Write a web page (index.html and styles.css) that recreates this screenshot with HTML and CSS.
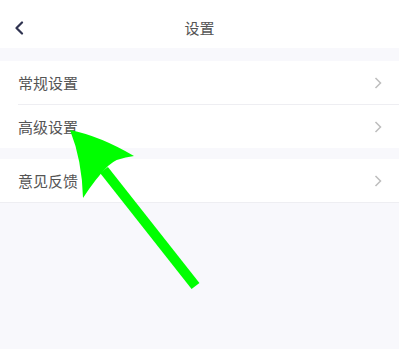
FILE: index.html
```html
<!DOCTYPE html>
<html lang="zh">
<head>
  <meta charset="UTF-8" />
  <title>设置</title>
  <link rel="stylesheet" href="styles.css">
</head>
<body>
  <div class="page">
    <div class="header">
      <svg class="back" width="10" height="14" viewBox="0 0 10 14">
        <path d="M8 1.5 L2.5 7 L8 12.5" fill="none" stroke="#2f3350" stroke-width="2.2" stroke-linecap="round" stroke-linejoin="round"/>
      </svg>
      <span class="title">设置</span>
    </div>

    <div class="group">
      <div class="row">
        <span>常规设置</span>
        <svg class="arrow" width="8" height="12" viewBox="0 0 8 12"><path d="M1.5 1 L6.5 6 L1.5 11" fill="none" stroke="#bdbdbd" stroke-width="1.5"/></svg>
      </div>
      <div class="row">
        <span>高级设置</span>
        <svg class="arrow" width="8" height="12" viewBox="0 0 8 12"><path d="M1.5 1 L6.5 6 L1.5 11" fill="none" stroke="#bdbdbd" stroke-width="1.5"/></svg>
      </div>
    </div>

    <div class="group last">
      <div class="row">
        <span>意见反馈</span>
        <svg class="arrow" width="8" height="12" viewBox="0 0 8 12"><path d="M1.5 1 L6.5 6 L1.5 11" fill="none" stroke="#bdbdbd" stroke-width="1.5"/></svg>
      </div>
    </div>
  </div>

  <!-- 标注箭头 -->
  <svg class="pointer" width="402" height="349" viewBox="0 0 402 349">
    <line x1="104" y1="170" x2="195.5" y2="286" stroke="#00ff00" stroke-width="10"/>
    <path d="M70 130 Q100 136 134 156 Q116 158 108 166 Q96 178 83 198 Q82 160 70 130 Z" fill="#00ff00"/>
  </svg>
</body>
</html>
```

FILE: styles.css
```css
body {
  margin: 0;
  background: #fff;
  font-family: "Noto Sans CJK SC", "Noto Sans", sans-serif;
}
.page {
  width: 399px;
  height: 349px;
  background: #f8f8fc;
}
.header {
  height: 48px;
  background: #fff;
  display: flex;
  align-items: center;
  justify-content: center;
  position: relative;
}
.back {
  position: absolute;
  left: 14px;
  top: 21px;
}
.title {
  font-size: 15px;
  color: #555;
  margin-top: 6px;
}
.group {
  margin-top: 13px;
  background: #fff;
  padding-left: 18px;
}
.group.last {
  margin-top: 11px;
  border-bottom: 1px solid #eeeef2;
}
.row {
  height: 43px;
  display: flex;
  align-items: center;
  justify-content: space-between;
  padding-right: 17px;
  font-size: 15px;
  color: #555;
}
.row + .row {
  border-top: 1px solid #eeeef2;
}
.arrow {
  margin-top: 1px;
}
.pointer {
  position: absolute;
  top: 0;
  left: 0;
}
```
